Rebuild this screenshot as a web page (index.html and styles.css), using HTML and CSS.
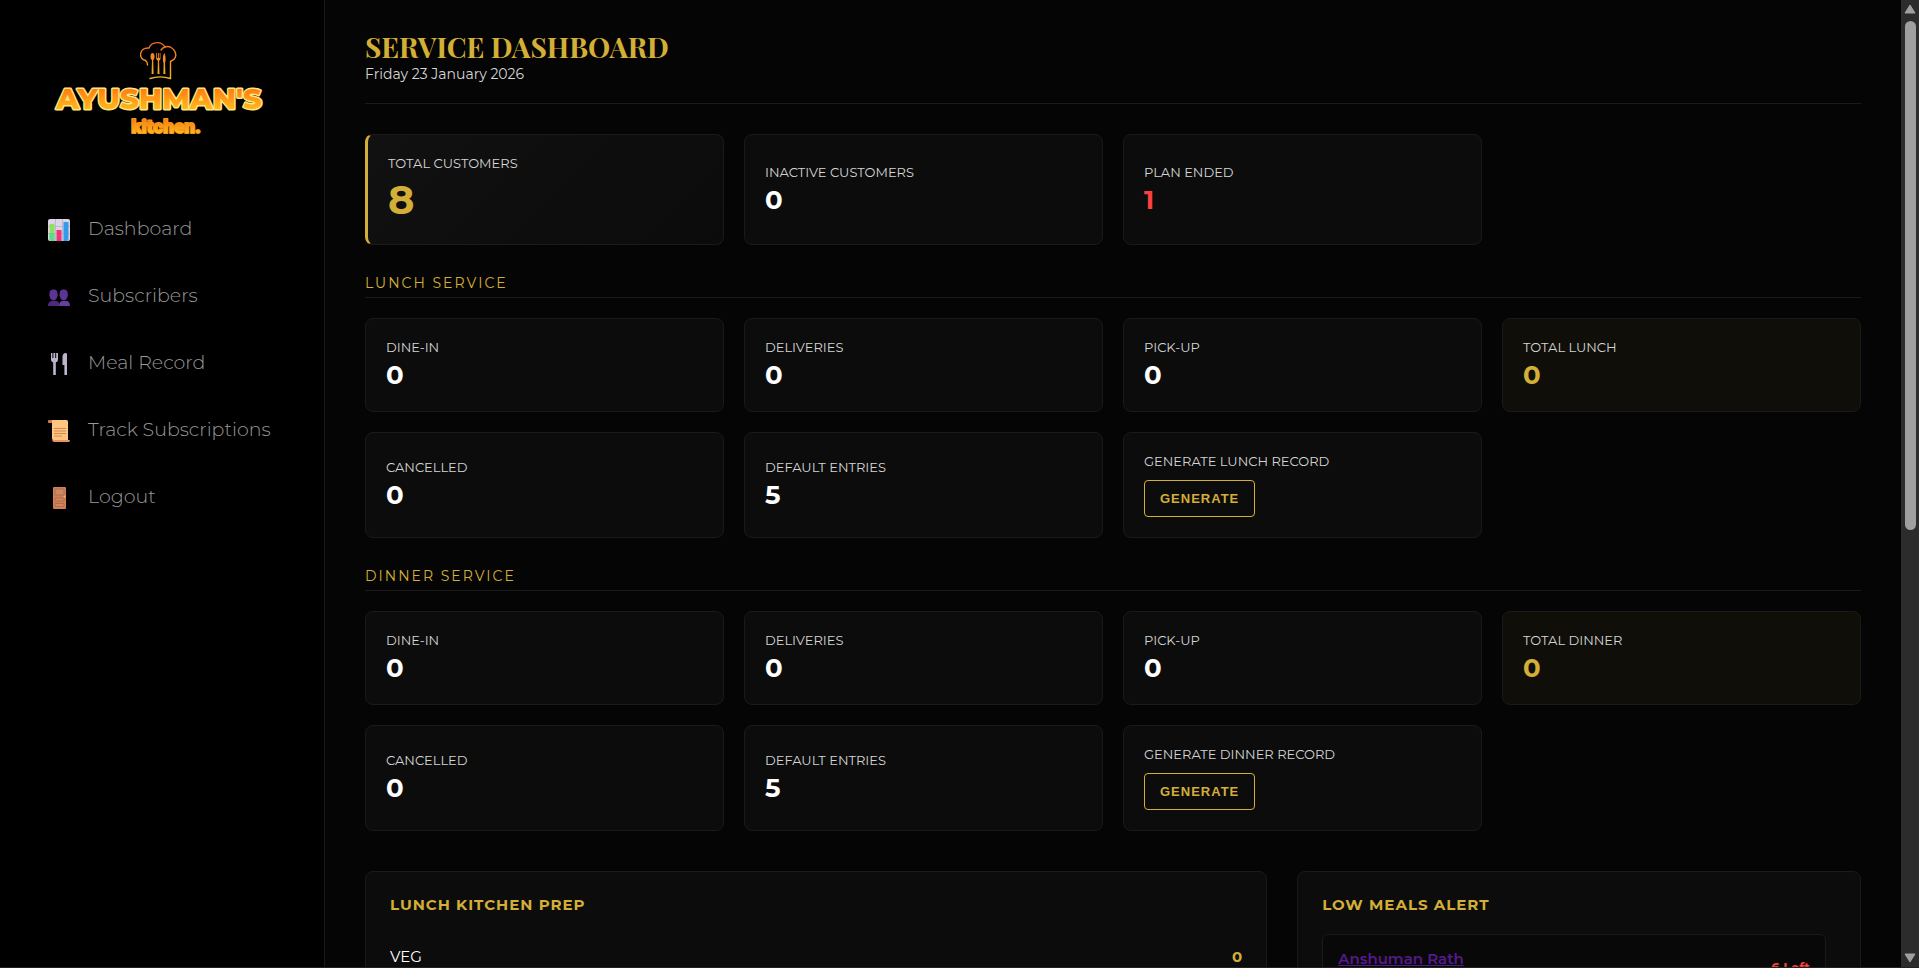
FILE: index.html
```html
<!DOCTYPE html>
<html lang="en">
<head>
	<meta charset="UTF-8">
	<meta name="viewport" content="width=device-width, initial-scale=1">
	<title>Service Dashboard</title>
	<link rel="stylesheet" href="styles.css">
</head>

<body>

	<aside class="sidebar">
		<svg class="logo" viewBox="0 0 240 116" role="img" aria-label="Ayushman's kitchen">
			<defs>
				<linearGradient id="fire" x1="0" y1="0" x2="0" y2="1">
					<stop offset="0.2" stop-color="#ff7a10"/>
					<stop offset="0.8" stop-color="#ffb81c"/>
				</linearGradient>
				<linearGradient id="hat" gradientUnits="userSpaceOnUse" x1="0" y1="12" x2="0" y2="50">
					<stop offset="0" stop-color="#f36a1a"/>
					<stop offset="1" stop-color="#f5b62a"/>
				</linearGradient>
			</defs>
			<!-- chef hat -->
			<g fill="none" stroke="url(#hat)" stroke-width="1.4" stroke-linecap="round">
				<path d="M105.500 30.500C98 29 99 17 109 18C112 11 121.500 11 125 17C134 14 141 28 130.500 31.500V48.500C124 46.500 116 46.500 110 48.500"/>
				<path d="M105.500 30.500C107 31.500 107.500 33 107.500 35M125 17C123.500 17.500 122 18.500 121 20"/>
			</g>
			<g fill="url(#hat)">
				<ellipse cx="112.500" cy="26.500" rx="2" ry="3.500"/>
				<path d="M112 29h1.200l.4 15h-2zM116.200 23h.8v5h.9v-5h.9v5h.9v-5h.8v6l-1.400 2 .4 13h-2l.4-13-1.700-2zM124.400 23c1.500 3 1.500 8 .6 10l.4 11h-2l.2-11c-1.200-3-.8-8 .8-10z"/>
			</g>
			<text class="logo-name" x="119" y="79" text-anchor="middle">AYUSHMAN'S</text>
			<text class="logo-sub" x="126" y="103" text-anchor="middle">kitchen.</text>
		</svg>

		<nav class="menu">
			<a href="#dashboard">
				<svg class="icon" viewBox="0 0 22 22" aria-hidden="true">
					<rect width="22" height="22" rx="2" fill="#ddd5e6"/>
					<path d="M0 7.500h22M0 14.500h22M7.500 0v22M14.500 0v22" stroke="#b9afc6" stroke-width=".8"/>
					<path d="M1.500 5h5v17h-3a2 2 0 0 1-2-2z" fill="#8fe05e"/>
					<path d="M1.500 14h5v8h-3a2 2 0 0 1-2-2z" fill="#5fd98b"/>
					<rect x="8.500" y="11" width="5" height="11" fill="#ee3577"/>
					<path d="M15.500 3h5v17a2 2 0 0 1-2 2h-3z" fill="#349bea"/>
				</svg>
				Dashboard
			</a>
			<a href="#subscribers">
				<svg class="icon" viewBox="0 0 22 22" aria-hidden="true">
					<g fill="#5b3591">
						<path d="M1.500 8c0-3.500 1.500-4.500 4-4.500s4 1 4 4.500l.3 1.200-.5 1.300c-.3 2.300-1.800 4-3.800 4s-3.500-1.700-3.800-4L1.200 9.200z"/>
						<path d="M11.700 8c0-3.500 1.500-4.500 4-4.500s4 1 4 4.500l.3 1.200-.5 1.300c-.3 2.300-1.800 4-3.800 4s-3.500-1.700-3.800-4l-.5-1.300z"/>
					</g>
					<path d="M0 20c0-3.500 2-5 4-5h4c2 0 3.500 1.500 3.500 5z" fill="#4c2b7c"/>
					<path d="M11 20c0-3.500 1.500-5 3.500-5h4c2 0 3.500 1.500 3.500 5z" fill="#65409c"/>
				</svg>
				Subscribers
			</a>
			<a href="#meals">
				<svg class="icon" viewBox="0 0 22 22" aria-hidden="true">
					<path d="M3 0h1.400v5h1V0h1.800v5h1V0H10v6.500C10 8 9 9 7.800 9.500V22H5.200V9.500C4 9 3 8 3 6.500z" fill="#bdb4cc"/>
					<path d="M19 22h-2.600V12H14.500V4c0-2.500 1.500-4 3-4 1 0 1.500.6 1.500 1.500z" fill="#bdb4cc"/>
				</svg>
				Meal Record
			</a>
			<a href="#track">
				<svg class="icon" viewBox="0 0 22 22" aria-hidden="true">
					<path d="M2 0h16.500A1.500 1.500 0 0 1 20 1.500V21H6.500L4 19V3H1.500A1.500 1.500 0 0 1 2 0z" fill="#fdc57f"/>
					<path d="M0 1.500C0 .6.700 0 1.500 0H4v3H1.500C.7 3 0 2.400 0 1.500z" fill="#d9764d"/>
					<path d="M5 20h17c0 1.400-.8 2-2 2H6.500C5 22 4 21 4 19z" fill="#ee9160"/>
					<path d="M6 8.500h12M6 11h12M6 13.500h12M6 16h8" stroke="#d98a52" stroke-width="1"/>
				</svg>
				Track Subscriptions
			</a>
			<a href="#logout">
				<svg class="icon" viewBox="0 0 22 22" aria-hidden="true">
					<rect x="5" y="0" width="13" height="22" rx="1" fill="#d18056"/>
					<path d="M7 2h9v6H7zM7 11h9v3H7zM7 16.500h9v3H7z" fill="#c98a68" stroke="#b0623f" stroke-width=".7"/>
					<circle cx="16.500" cy="9.500" r="1" fill="#f6c04c"/>
				</svg>
				Logout
			</a>
		</nav>
	</aside>

	<main class="content">
		<header class="page-header">
			<h1>SERVICE DASHBOARD</h1>
			<p>Friday 23 January 2026</p>
		</header>

		<section class="cards">
			<div class="card highlight">
				<span class="label">TOTAL CUSTOMERS</span>
				<span class="value">8</span>
			</div>
			<div class="card">
				<span class="label">INACTIVE CUSTOMERS</span>
				<span class="value">0</span>
			</div>
			<div class="card danger">
				<span class="label">PLAN ENDED</span>
				<span class="value">1</span>
			</div>
		</section>

		<!-- Lunch -->
		<h2 class="section-title">LUNCH SERVICE</h2>
		<section class="cards">
			<div class="card">
				<span class="label">DINE-IN</span>
				<span class="value">0</span>
			</div>
			<div class="card">
				<span class="label">DELIVERIES</span>
				<span class="value">0</span>
			</div>
			<div class="card">
				<span class="label">PICK-UP</span>
				<span class="value">0</span>
			</div>
			<div class="card total">
				<span class="label">TOTAL LUNCH</span>
				<span class="value">0</span>
			</div>
			<div class="card">
				<span class="label">CANCELLED</span>
				<span class="value">0</span>
			</div>
			<div class="card">
				<span class="label">DEFAULT ENTRIES</span>
				<span class="value">5</span>
			</div>
			<div class="card">
				<span class="label">GENERATE LUNCH RECORD</span>
				<button type="button" class="btn">GENERATE</button>
			</div>
		</section>

		<!-- Dinner -->
		<h2 class="section-title">DINNER SERVICE</h2>
		<section class="cards">
			<div class="card">
				<span class="label">DINE-IN</span>
				<span class="value">0</span>
			</div>
			<div class="card">
				<span class="label">DELIVERIES</span>
				<span class="value">0</span>
			</div>
			<div class="card">
				<span class="label">PICK-UP</span>
				<span class="value">0</span>
			</div>
			<div class="card total">
				<span class="label">TOTAL DINNER</span>
				<span class="value">0</span>
			</div>
			<div class="card">
				<span class="label">CANCELLED</span>
				<span class="value">0</span>
			</div>
			<div class="card">
				<span class="label">DEFAULT ENTRIES</span>
				<span class="value">5</span>
			</div>
			<div class="card">
				<span class="label">GENERATE DINNER RECORD</span>
				<button type="button" class="btn">GENERATE</button>
			</div>
		</section>

		<div class="panels">
			<section class="panel">
				<h3>LUNCH KITCHEN PREP</h3>
				<div class="prep-row">
					<span>VEG</span>
					<strong>0</strong>
				</div>
			</section>

			<section class="panel">
				<h3>LOW MEALS ALERT</h3>
				<div class="alert-list">
					<div class="alert-item">
						<a href="#">Anshuman Rath</a>
						<span class="left">6 Left</span>
					</div>
				</div>
			</section>
		</div>
	</main>

	<div class="scrollbar" aria-hidden="true">
		<svg viewBox="0 0 12 10"><path d="M6 1l5 8H1z"/></svg>
		<div class="track"><div class="thumb"></div></div>
		<svg viewBox="0 0 12 10"><path d="M6 9l5-8H1z"/></svg>
	</div>

</body>
</html>
```

FILE: styles.css
```css
* {
	box-sizing: border-box;
	margin: 0;
	padding: 0;
}

body {
	display: flex;
	height: 100vh;
	overflow: hidden;
	background: #050505;
	border-bottom: 1px solid #222;
	color: #fff;
	font-family: Montserrat, Inter, sans-serif;
}

/* Sidebar */
.sidebar {
	flex: 0 0 325px;
	padding: 30px 40px;
	background: #000;
	border-right: 1px solid #1a1a1a;
}

.logo {
	display: block;
	width: 240px;
	height: 116px;
}

.logo-name,
.logo-sub {
	font-weight: 800;
	fill: url(#fire);
	stroke: #ffe680;
	stroke-width: 3px;
	stroke-linejoin: round;
	paint-order: stroke;
}

.logo-name {
	font-size: 29px;
}

.logo-sub {
	font-family: Roboto, sans-serif;
	font-size: 19px;
	font-weight: 900;
	stroke: #f09a1c;
	stroke-width: 2px;
}

.menu {
	display: flex;
	flex-direction: column;
	gap: 19px;
	margin-top: 58px;
}

.menu a {
	display: flex;
	align-items: center;
	gap: 18px;
	height: 48px;
	padding-left: 8px;
	color: #999;
	font-size: 19px;
	font-weight: 300;
	text-decoration: none;
	white-space: nowrap;
}

.menu a:hover {
	color: #d4af37;
}

.icon {
	width: 22px;
	height: 22px;
	margin-top: 3px;
}

/* Main */
.content {
	flex: 1;
	min-width: 0;
	padding: 30px 40px;
	overflow: hidden;
}

.page-header {
	padding-bottom: 20px;
	margin-bottom: 30px;
	border-bottom: 1px solid #1a1a1a;
}

.page-header h1 {
	margin-bottom: 2px;
	color: #d4af37;
	font-family: "Playfair Display", "Liberation Serif", serif;
	font-size: 28px;
	line-height: 34px;
}

.page-header p {
	color: #d5d5d5;
	font-size: 14px;
	line-height: 17px;
}

.section-title {
	margin: 30px 0 20px;
	padding-bottom: 5px;
	border-bottom: 1px solid #1a1a1a;
	color: #d4af37;
	font-size: 14px;
	font-weight: 400;
	letter-spacing: 2px;
	line-height: 17px;
}

.cards {
	display: grid;
	grid-template-columns: repeat(4, 1fr);
	gap: 20px;
}

.card {
	display: flex;
	flex-direction: column;
	align-items: flex-start;
	justify-content: center;
	padding: 20px;
	background: #0c0c0c;
	border: 1px solid #1a1a1a;
	border-radius: 8px;
}

.label {
	margin-bottom: 5px;
	color: #d5d5d5;
	font-size: 13px;
	line-height: 16px;
}

.value {
	font-size: 26px;
	font-weight: 700;
	line-height: 31px;
}

.highlight {
	background: linear-gradient(135deg, #111, #0b0b0b);
	border-left: 3px solid #d4af37;
}

.highlight .value {
	color: #d4af37;
	font-size: 40px;
	line-height: 48px;
}

.danger .value {
	color: #ff4040;
}

.total {
	background: #0f0e09;
}

.total .value {
	color: #d4af37;
}

.btn {
	height: 37px;
	margin-top: 6px;
	padding: 0 15px;
	background: transparent;
	border: 1px solid #d4af37;
	border-radius: 4px;
	color: #d4af37;
	font-family: "Liberation Sans", Arial, sans-serif;
	font-size: 13px;
	font-weight: 600;
	letter-spacing: 1px;
	cursor: pointer;
}

/* Bottom panels */
.panels {
	display: grid;
	grid-template-columns: 1.6fr 1fr;
	gap: 30px;
	margin-top: 40px;
}

.panel {
	padding: 24px;
	background: #0c0c0c;
	border: 1px solid #1a1a1a;
	border-radius: 8px;
}

.panel h3 {
	margin-bottom: 20px;
	color: #d4af37;
	font-size: 15px;
	font-weight: 700;
	letter-spacing: 1px;
	line-height: 18px;
}

.prep-row {
	display: flex;
	justify-content: space-between;
	padding: 14px 0;
	font-size: 15px;
	line-height: 18px;
}

.prep-row strong {
	color: #d4af37;
}

.alert-list {
	padding-right: 10px;
}

.alert-item {
	display: flex;
	align-items: center;
	justify-content: space-between;
	height: 66px;
	padding: 15px;
	background: #080808;
	border: 1px solid #1a1a1a;
	border-radius: 6px;
	font-size: 15px;
	font-weight: 600;
	line-height: 18px;
}

.alert-item a {
	align-self: flex-start;
	color: #551a8b;
}

.left {
	color: #ff4040;
	font-size: 13px;
	font-weight: 700;
}

/* Scrollbar */
.scrollbar {
	display: flex;
	flex: 0 0 18px;
	flex-direction: column;
	align-items: center;
	gap: 7px;
	padding: 4px 0;
	background: #2c2c2c;
}

.scrollbar svg {
	width: 12px;
	height: 10px;
	fill: #9f9f9f;
	stroke: #9f9f9f;
	stroke-linejoin: round;
}

.track {
	flex: 1;
	width: 11px;
}

.thumb {
	height: 55%;
	background: #9f9f9f;
	border-radius: 6px;
}
```
